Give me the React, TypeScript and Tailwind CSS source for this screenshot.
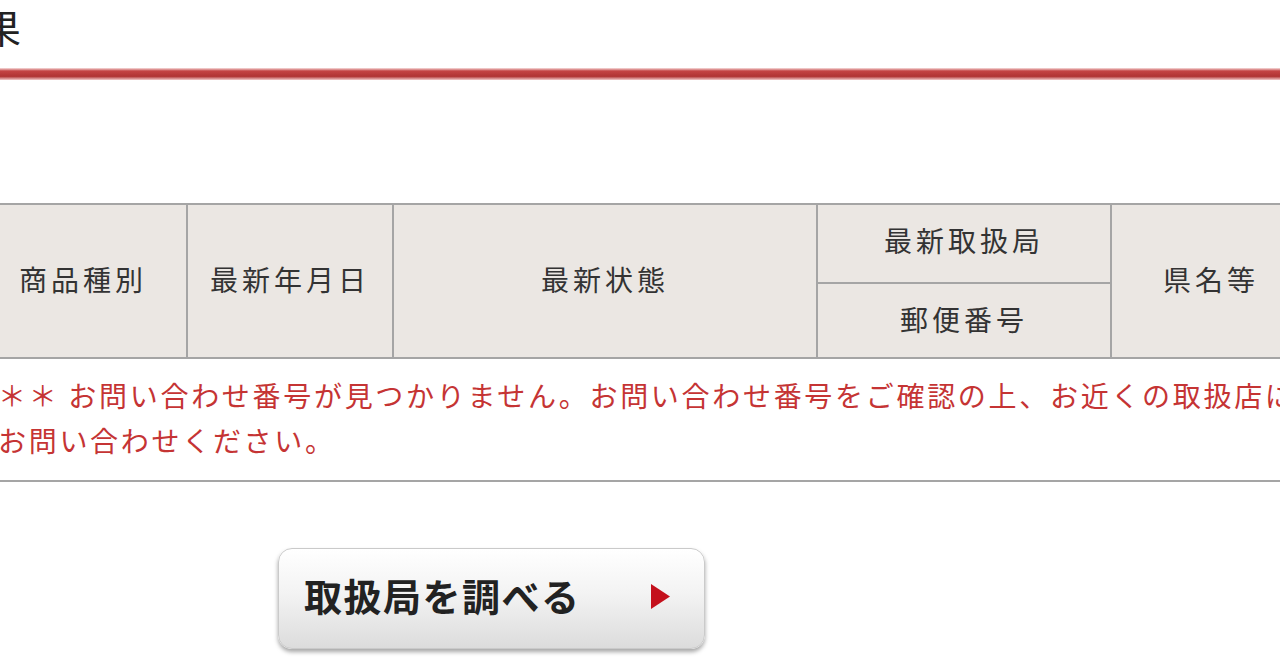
const jp = { fontFamily: '"Noto Sans CJK JP", "Noto Sans", sans-serif' };

function HeaderCell({
  children,
  rowSpan,
  className = "pb-[5px]",
}: {
  children: React.ReactNode;
  rowSpan?: number;
  className?: string;
}) {
  return (
    <th
      rowSpan={rowSpan}
      className={`border-2 border-[#a5a5a5] bg-[#ebe7e3] px-0 pt-0 text-center align-middle text-[28px] font-normal leading-none tracking-[4px] text-[#333] ${className}`}
    >
      {children}
    </th>
  );
}

export default function App() {
  return (
    <div className="h-[670px] w-[1280px] overflow-hidden bg-white" style={jp}>
      {/* page title, cut at the left edge */}
      <div className="h-[68px] pt-[7px]">
        <h1 className="ml-[-57px] text-[39px] font-normal leading-none text-[#222]">
          結果
        </h1>
      </div>
      <div className="h-[12px] bg-[linear-gradient(to_bottom,#f7dede_0%,#c44444_25%,#b03434_70%,#f2cccc_100%)]" />

      <div className="mt-[123px] ml-[-22px]">
        <table className="w-[1332px] table-fixed border-collapse">
          <colgroup>
            <col className="w-[208px]" />
            <col className="w-[206px]" />
            <col className="w-[424px]" />
            <col className="w-[294px]" />
            <col className="w-[200px]" />
          </colgroup>
          <thead>
            <tr className="h-[79px]">
              <HeaderCell rowSpan={2}>商品種別</HeaderCell>
              <HeaderCell rowSpan={2}>最新年月日</HeaderCell>
              <HeaderCell rowSpan={2}>最新状態</HeaderCell>
              <HeaderCell className="pb-[8px]">最新取扱局</HeaderCell>
              <HeaderCell rowSpan={2}>県名等</HeaderCell>
            </tr>
            <tr className="h-[75px]">
              <HeaderCell className="pb-[3px]">郵便番号</HeaderCell>
            </tr>
          </thead>
          <tbody>
            <tr className="h-[123px]">
              <td
                colSpan={5}
                className="border-2 border-[#a5a5a5] pl-[18px] pb-[4px] align-middle whitespace-nowrap text-[28px] leading-[45px] tracking-[2.7px] text-[#c53434]"
              >
                ＊＊ お問い合わせ番号が見つかりません。お問い合わせ番号をご確認の上、お近くの取扱店に
                <br />
                お問い合わせください。
              </td>
            </tr>
          </tbody>
        </table>
      </div>

      <div className="mt-[66px] pl-[278px]">
        <button
          type="button"
          className="flex h-[101px] w-[427px] items-center rounded-[14px] border border-[#cacaca] bg-[linear-gradient(to_bottom,#ffffff_0%,#f3f3f3_45%,#dcdcdc_100%)] pl-[25px] shadow-[0_3px_4px_rgba(0,0,0,0.35)]"
        >
          <span className="pb-[7px] text-[38px] font-bold leading-none tracking-[1.5px] text-[#222]">
            取扱局を調べる
          </span>
          <svg
            className="ml-auto mr-[34px] mb-[4px]"
            width="19"
            height="25"
            viewBox="0 0 19 25"
          >
            <polygon points="0,0 19,12.5 0,25" fill="#c4101c" />
          </svg>
        </button>
      </div>
    </div>
  );
}
